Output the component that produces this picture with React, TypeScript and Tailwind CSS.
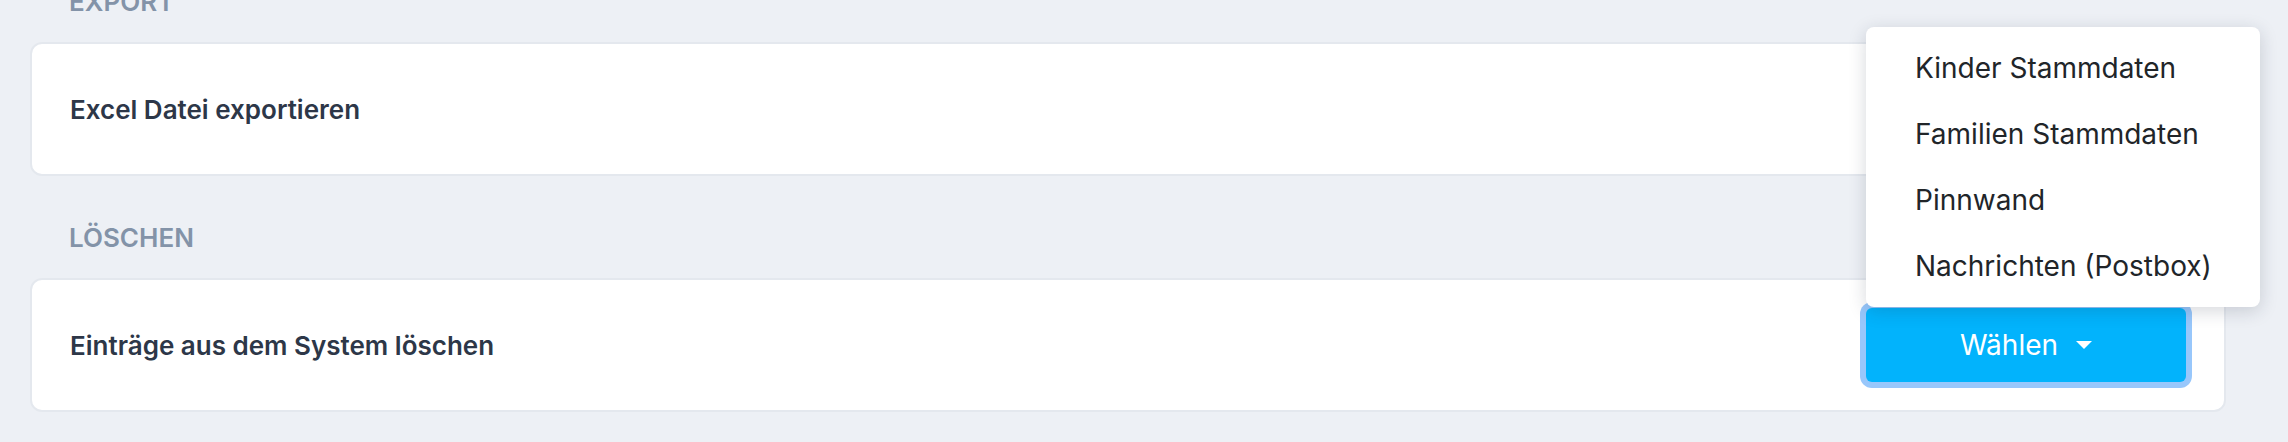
import React from "react";

const menuItems = [
  "Kinder Stammdaten",
  "Familien Stammdaten",
  "Pinnwand",
  "Nachrichten (Postbox)",
];

function SectionLabel({ children }: { children: React.ReactNode }) {
  return (
    <div className="h-[39px] pl-[39px] text-[26px] leading-[39px] font-semibold uppercase text-[#8393a8]">
      {children}
    </div>
  );
}

function Card({ children }: { children: React.ReactNode }) {
  return (
    <div className="mt-[21px] flex h-[134px] items-center justify-between rounded-[12px] border-2 border-[#e4e8ee] bg-white pl-[38px] pr-[38px]">
      {children}
    </div>
  );
}

function SelectDropdown() {
  return (
    <div className="relative">
      {/* menu is shown open, sitting above the button */}
      <div className="absolute bottom-[75px] left-0 z-10 w-[394px] rounded-[8px] bg-white py-[8px] shadow-[0_4px_18px_rgba(30,41,59,0.18)]">
        {menuItems.map((item) => (
          <div
            key={item}
            className="flex h-[66px] items-center pl-[49px] text-[28px] text-[#212529]"
          >
            {item}
          </div>
        ))}
      </div>
      <button className="flex h-[74px] w-[320px] items-center justify-center rounded-[6px] bg-[#02b3fc] text-[28px] text-white ring-[6px] ring-[#98c7fb]">
        <span>Wählen</span>
        <span className="ml-[18px] h-0 w-0 border-x-[8px] border-t-[8px] border-x-transparent border-t-white" />
      </button>
    </div>
  );
}

export default function App() {
  return (
    <div
      className="h-[442px] w-full overflow-hidden bg-[#edf0f5] pl-[30px] pr-[62px]"
      style={{ fontFamily: "Inter, 'Noto Sans', sans-serif" }}
    >
      <div className="mt-[-18px] flex flex-col">
        <SectionLabel>Export</SectionLabel>
        <Card>
          <span className="text-[26px] font-semibold text-[#2d3748]">
            Excel Datei exportieren
          </span>
        </Card>

        <div className="mt-[42px]">
          <SectionLabel>Löschen</SectionLabel>
          <Card>
            <span className="text-[26px] font-semibold text-[#2d3748]">
              Einträge aus dem System löschen
            </span>
            <SelectDropdown />
          </Card>
        </div>
      </div>
    </div>
  );
}
